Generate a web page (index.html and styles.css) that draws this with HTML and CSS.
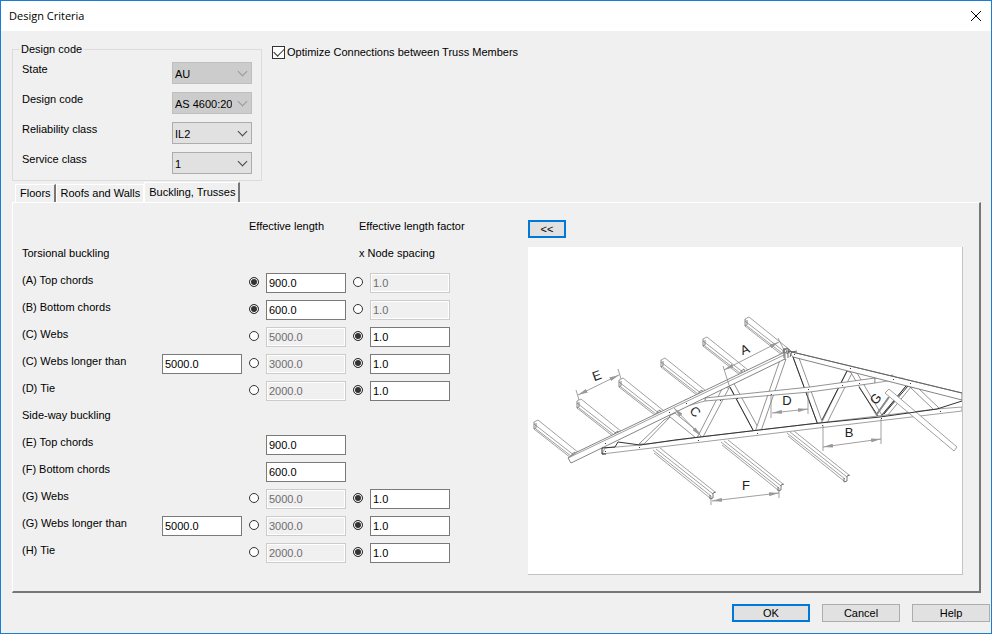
FILE: index.html
```html
<!DOCTYPE html>
<html lang="en">

<head>
    <meta charset="UTF-8">
    <meta name="viewport" content="width=device-width, initial-scale=1.0">
    <title>Design Criteria</title>
    <link rel="stylesheet" href="styles.css">
</head>

<body>

    <header class="titlebar">
        <h1>Design Criteria</h1>
        <button type="button" class="close" aria-label="Close">
            <svg width="12" height="12" viewBox="0 0 12 12"><path d="M1 1l10 10M11 1L1 11" stroke="#000" fill="none"/></svg>
        </button>
    </header>

    <form class="dialog">
        <div class="top">
            <fieldset class="code">
                <legend>Design code</legend>
                <div class="code-row">
                    <label for="state">State</label>
                    <span class="select disabled"><select id="state" disabled><option>AU</option></select></span>
                </div>
                <div class="code-row">
                    <label for="code">Design code</label>
                    <span class="select disabled"><select id="code" disabled><option>AS 4600:2005</option></select></span>
                </div>
                <div class="code-row">
                    <label for="reliability">Reliability class</label>
                    <span class="select"><select id="reliability"><option>IL2</option></select></span>
                </div>
                <div class="code-row">
                    <label for="service">Service class</label>
                    <span class="select"><select id="service"><option>1</option></select></span>
                </div>
            </fieldset>
            <label class="optimize"><input type="checkbox" checked>Optimize Connections between Truss Members</label>
        </div>

        <div class="tabs" role="tablist">
            <button type="button" class="tab" role="tab">Floors</button>
            <button type="button" class="tab" role="tab">Roofs and Walls</button>
            <button type="button" class="tab active" role="tab" aria-selected="true">Buckling, Trusses</button>
        </div>

        <div class="panel">
            <div class="buckling">
                <div class="row">
                    <span class="head-length">Effective length</span>
                    <span class="head-factor">Effective length factor</span>
                </div>
                <div class="row">
                    <span class="name">Torsional buckling</span>
                    <span class="head-factor">x Node spacing</span>
                </div>
                <div class="row">
                    <label class="name" for="a-len">(A) Top chords</label>
                    <input class="pick-length" type="radio" name="a" aria-label="A length" checked>
                    <input class="length" type="text" id="a-len" value="900.0">
                    <input class="pick-factor" type="radio" name="a" aria-label="A factor">
                    <input class="factor" type="text" aria-label="A factor value" value="1.0" disabled>
                </div>
                <div class="row">
                    <label class="name" for="b-len">(B) Bottom chords</label>
                    <input class="pick-length" type="radio" name="b" aria-label="B length" checked>
                    <input class="length" type="text" id="b-len" value="600.0">
                    <input class="pick-factor" type="radio" name="b" aria-label="B factor">
                    <input class="factor" type="text" aria-label="B factor value" value="1.0" disabled>
                </div>
                <div class="row">
                    <label class="name" for="c-len">(C) Webs</label>
                    <input class="pick-length" type="radio" name="c" aria-label="C length">
                    <input class="length" type="text" id="c-len" value="5000.0" disabled>
                    <input class="pick-factor" type="radio" name="c" aria-label="C factor" checked>
                    <input class="factor" type="text" aria-label="C factor value" value="1.0">
                </div>
                <div class="row">
                    <label class="name" for="c-limit">(C) Webs longer than</label>
                    <input class="limit" type="text" id="c-limit" value="5000.0">
                    <input class="pick-length" type="radio" name="c2" aria-label="C long length">
                    <input class="length" type="text" aria-label="C long length value" value="3000.0" disabled>
                    <input class="pick-factor" type="radio" name="c2" aria-label="C long factor" checked>
                    <input class="factor" type="text" aria-label="C long factor value" value="1.0">
                </div>
                <div class="row">
                    <label class="name" for="d-len">(D) Tie</label>
                    <input class="pick-length" type="radio" name="d" aria-label="D length">
                    <input class="length" type="text" id="d-len" value="2000.0" disabled>
                    <input class="pick-factor" type="radio" name="d" aria-label="D factor" checked>
                    <input class="factor" type="text" aria-label="D factor value" value="1.0">
                </div>
                <div class="row">
                    <span class="name">Side-way buckling</span>
                </div>
                <div class="row">
                    <label class="name" for="e-len">(E) Top chords</label>
                    <input class="length" type="text" id="e-len" value="900.0">
                </div>
                <div class="row">
                    <label class="name" for="f-len">(F) Bottom chords</label>
                    <input class="length" type="text" id="f-len" value="600.0">
                </div>
                <div class="row">
                    <label class="name" for="g-len">(G) Webs</label>
                    <input class="pick-length" type="radio" name="g" aria-label="G length">
                    <input class="length" type="text" id="g-len" value="5000.0" disabled>
                    <input class="pick-factor" type="radio" name="g" aria-label="G factor" checked>
                    <input class="factor" type="text" aria-label="G factor value" value="1.0">
                </div>
                <div class="row">
                    <label class="name" for="g-limit">(G) Webs longer than</label>
                    <input class="limit" type="text" id="g-limit" value="5000.0">
                    <input class="pick-length" type="radio" name="g2" aria-label="G long length">
                    <input class="length" type="text" aria-label="G long length value" value="3000.0" disabled>
                    <input class="pick-factor" type="radio" name="g2" aria-label="G long factor" checked>
                    <input class="factor" type="text" aria-label="G long factor value" value="1.0">
                </div>
                <div class="row">
                    <label class="name" for="h-len">(H) Tie</label>
                    <input class="pick-length" type="radio" name="h" aria-label="H length">
                    <input class="length" type="text" id="h-len" value="2000.0" disabled>
                    <input class="pick-factor" type="radio" name="h" aria-label="H factor" checked>
                    <input class="factor" type="text" aria-label="H factor value" value="1.0">
                </div>
            </div>

            <div class="preview">
                <button type="button" class="btn default collapse">&lt;&lt;</button>
                <svg class="truss" viewBox="528 247 434 327" role="img" aria-label="Truss diagram">
                    <defs>
                        <marker id="arrow" viewBox="0 0 10 4" markerWidth="10" markerHeight="4" refX="10" refY="2" orient="auto-start-reverse" markerUnits="userSpaceOnUse">
                            <path d="M0 0l10 2-10 2z" fill="#999"/>
                        </marker>
                        <g id="purlin">
                            <path d="M0 1l4-2 41 33M0 3l41 32M0 8l37 29M2 8l35 27" stroke="#888"/>
                            <path d="M0 1v7l2-1V2M38 38v-5l3-2 1 5 3-3" stroke="#666"/>
                        </g>
                        <g id="lower-purlin">
                            <path d="M0 0l58 46M3-1l57 45M7-2l55 44M1 3l56 45" stroke="#888"/>
                            <path d="M57 49l3-1v-5l3-1M57 49v-4" stroke="#555"/>
                        </g>
                    </defs>

                    <g fill="none" stroke-width="0.8">
                        <use href="#purlin" x="534" y="421"/>
                        <use href="#purlin" x="577" y="400"/>
                        <use href="#purlin" x="619" y="379"/>
                        <use href="#purlin" x="661" y="359"/>
                        <use href="#purlin" x="703" y="338"/>
                        <use href="#purlin" x="745" y="318"/>
                        <use href="#lower-purlin" x="653" y="450"/>
                        <use href="#lower-purlin" x="721" y="442"/>
                        <use href="#lower-purlin" x="787" y="433"/>
                    </g>

                    <!-- webs -->
                    <g fill="#fff" stroke="#777" stroke-width="0.8">
                        <path d="M639 444l25-24 6-3-26 27z"/>
                        <path d="M669 416l27 22 6-3-27-22z"/>
                        <path d="M697 438l26-51 6 1-26 49z"/>
                        <path d="M727 382l27 50 6-1-28-51z"/>
                        <path d="M755 432l25-72 6-1-25 72z"/>
                        <path d="M793 357l25 68 5-1-24-66z"/>
                        <path d="M821 424l26-53 5 2-25 50z"/>
                        <path d="M850 371l28 47 5-1-26-44z"/>
                        <path d="M881 417l25-31 5 1-24 29z"/>
                        <path d="M910 387l24 23 6-1-22-21z"/>
                    </g>
                    <path d="M793 357l25 68M822 420l25-49M859 387l19 29M881 416l25-30M884 414l24-28M730 387l23 43" fill="none" stroke="#333"/>

                    <!-- chords -->
                    <g fill="#fff" stroke="#888" stroke-width="0.8">
                        <path d="M705 398l105-11 65-9v5l-65 9-105 9z" stroke="#777"/>
                        <path d="M875 378l18-3v5l-18 3zM893 380l10-2M687 406l18-5v-6l-20 5"/>
                        <path d="M605 448l35-3 60-8 110-13 127-15 25-2v4l-152 18-208 25z"/>
                        <path d="M788 351l174 42v7l-169-43z" stroke="#666"/>
                        <path d="M568 458l3 5 214-104v-7L577 452z" stroke="#666"/>
                        <path d="M568 458l216-103" fill="none"/>
                        <path d="M889 389l68 58-3 4-69-58z"/>
                    </g>
                    <g fill="none" stroke="#333">
                        <path d="M602 448v6h4M602 448l13-1 3-5 22 3 35-5 25-3 110-13 70-7 57-8 25-8"/>
                        <path d="M783 350l4-2 5 4 5-1M784 348v10M788 349v9M792 351l-2 6M788 351l174 42" stroke="#666"/>
                    </g>
                    <path d="M877 414l12-17" fill="none" stroke="#888" stroke-width="2"/>

                    <!-- bolts -->
                    <path d="M605 443h1v1h-1zM605 451h1v1h-1zM639 447h1v1h-1zM669 412h1v1h-1zM686 403h1v1h-1zM698 440h1v1h-1zM720 400h1v1h-1zM737 398h1v1h-1zM757 433h1v1h-1zM794 354h1v1h-1zM771 394h1v1h-1zM808 389h1v1h-1zM822 425h1v1h-1zM850 368h1v1h-1zM859 383h1v1h-1zM842 385h1v1h-1zM881 418h1v1h-1zM893 379h1v1h-1zM910 383h1v1h-1zM940 411h1v1h-1z" fill="#722"/>

                    <!-- dimension lines -->
                    <g fill="none" stroke="#888" stroke-width="0.8">
                        <path d="M576 390l3 10M618 369l3 10M723 366l7 22M778 338l7 14M771 394v24M808 392v22M823 425v26M881 419v25M711 496v9M779 488v10"/>
                        <path d="M578 395l41-20" marker-start="url(#arrow)" marker-end="url(#arrow)"/>
                        <path d="M724 370l55-28" marker-start="url(#arrow)" marker-end="url(#arrow)"/>
                        <path d="M674 408l27 28" marker-start="url(#arrow)" marker-end="url(#arrow)"/>
                        <path d="M772 413l36-4" marker-start="url(#arrow)" marker-end="url(#arrow)"/>
                        <path d="M823 447l58-8" marker-start="url(#arrow)" marker-end="url(#arrow)"/>
                        <path d="M712 501l67-8" marker-start="url(#arrow)" marker-end="url(#arrow)"/>
                    </g>
                    <g class="mark">
                        <text transform="translate(597 376) rotate(-20)" y="4">E</text>
                        <text transform="translate(745 350) rotate(-22)" y="4">A</text>
                        <text transform="translate(695 412) rotate(45)" y="4">C</text>
                        <text x="787" y="405">D</text>
                        <text x="849" y="437">B</text>
                        <text x="746" y="490">F</text>
                        <text transform="translate(876 399) rotate(-50)" y="4">G</text>
                    </g>
                </svg>
            </div>
        </div>

        <footer class="actions">
            <button type="submit" class="btn default">OK</button>
            <button type="button" class="btn">Cancel</button>
            <button type="button" class="btn">Help</button>
        </footer>
    </form>

</body>

</html>
```
FILE: styles.css
```css
* {
    box-sizing: border-box;
}

body {
    margin: 0;
    min-height: 100vh;
    border: 1px solid #1a7fd4;
    background-color: #f0f0f0;
    color: #000;
    font-family: "Liberation Sans", Arial, sans-serif;
    font-size: 11px;
    line-height: 14px;
}

button,
input,
select {
    font: inherit;
    color: inherit;
    margin: 0;
}

.titlebar {
    display: flex;
    align-items: center;
    justify-content: space-between;
    height: 30px;
    padding: 0 8px;
    background-color: #fff;
}

.titlebar h1 {
    margin: 0;
    font-family: "Open Sans", "Noto Sans", sans-serif;
    font-size: 11px;
    font-weight: normal;
}

.close {
    display: flex;
    padding: 1px;
    border: none;
    background: none;
}

.dialog {
    padding: 11px 0 0 11px;
}

.top {
    display: flex;
    align-items: flex-start;
    gap: 10px;
}

.code {
    width: 250px;
    margin: 0;
    padding: 6px 9px 0;
    border: 1px solid #dcdcdc;
}

.code legend {
    margin-left: -3px;
    padding: 0 2px;
}

.code-row {
    display: flex;
    justify-content: space-between;
    height: 30px;
}

.code-row:last-child {
    height: 28px;
}

.select {
    position: relative;
    width: 80px;
    height: 22px;
}

.select select {
    width: 100%;
    height: 100%;
    padding: 1px 19px 0 2px;
    border: 1px solid #adadad;
    border-radius: 0;
    background-color: #e1e1e1;
    appearance: none;
    opacity: 1;
}

/* drop-down arrow */
.select::after {
    content: "";
    position: absolute;
    top: 6px;
    right: 6px;
    width: 6px;
    height: 6px;
    border: solid #444;
    border-width: 0 1px 1px 0;
    transform: rotate(45deg);
    pointer-events: none;
}

.select.disabled select {
    border-color: #bfbfbf;
    background-color: #ccc;
}

.select.disabled::after {
    border-color: #999;
}

.optimize {
    display: flex;
    align-items: center;
    gap: 2px;
    padding-top: 3px;
}

input[type=checkbox] {
    display: grid;
    place-items: center;
    width: 13px;
    height: 13px;
    border: 1px solid #333;
    background-color: #fff;
    appearance: none;
}

input[type=checkbox]:checked::before {
    content: "";
    width: 9px;
    height: 5px;
    margin-bottom: 3px;
    border: solid #333;
    border-width: 0 0 1px 1px;
    transform: rotate(-45deg);
}

.tabs {
    display: flex;
    align-items: flex-end;
    height: 21px;
    padding-left: 3px;
}

.tab {
    height: 18px;
    padding: 0 3px 1px 4px;
    border: solid #fff;
    border-width: 1px 1px 0;
    background-color: #f0f0f0;
    white-space: nowrap;
}

.tab:first-child {
    border-right: 2px solid #777;
}

.tab.active {
    height: 20px;
    border-right: 2px solid #777;
}

.panel {
    display: flex;
    gap: 78px;
    margin-right: 10px;
    padding: 16px 16px 16px 9px;
    border: solid #fff;
    border-width: 1px 2px 2px 1px;
    border-right-color: #777;
    border-bottom-color: #777;
}

.row {
    display: grid;
    grid-template-columns: 140px 87px 17px 87px 17px 80px;
    align-items: start;
    height: 27px;
}

.row > * {
    grid-row: 1;
}

.name {
    grid-column: 1 / 3;
}

.limit {
    grid-column: 2;
}

.pick-length {
    grid-column: 3;
}

.length {
    grid-column: 4;
}

.pick-factor {
    grid-column: 5;
}

.factor {
    grid-column: 6;
}

.head-length {
    grid-column: 3 / 5;
}

.head-factor {
    grid-column: 5 / 7;
    padding-left: 6px;
    white-space: nowrap;
}

input[type=text] {
    width: 80px;
    height: 20px;
    padding: 0 2px;
    border: 1px solid #7a7a7a;
    background-color: #fff;
}

input[type=text]:disabled {
    border-color: #ccc;
    background-color: #f0f0f0;
    box-shadow: inset 0 0 0 1px #fff;
    color: #6d6d6d;
}

input[type=radio] {
    width: 10px;
    height: 10px;
    margin-top: 4px;
    border: 1px solid #333;
    border-radius: 50%;
    background-color: #fff;
    appearance: none;
}

input[type=radio]:checked {
    background-color: #333;
    box-shadow: inset 0 0 0 1px #fff;
}

.preview {
    flex: 1;
    padding-top: 1px;
}

.truss {
    display: block;
    width: 100%;
    margin-top: 9px;
    border: solid #c3c3c3;
    border-width: 0 1px 1px 0;
    background-color: #fff;
}

.mark {
    fill: #222;
    font-family: "Liberation Sans", sans-serif;
    font-size: 13px;
    text-anchor: middle;
}

.btn {
    width: 78px;
    height: 18px;
    padding: 0;
    border: 1px solid #adadad;
    background-color: #e1e1e1;
}

.btn.default {
    border: 2px solid #0078d7;
}

.btn.collapse {
    display: block;
    width: 38px;
}

.actions {
    display: flex;
    justify-content: flex-end;
    gap: 12px;
    padding: 11px 1px 11px 0;
}
```
